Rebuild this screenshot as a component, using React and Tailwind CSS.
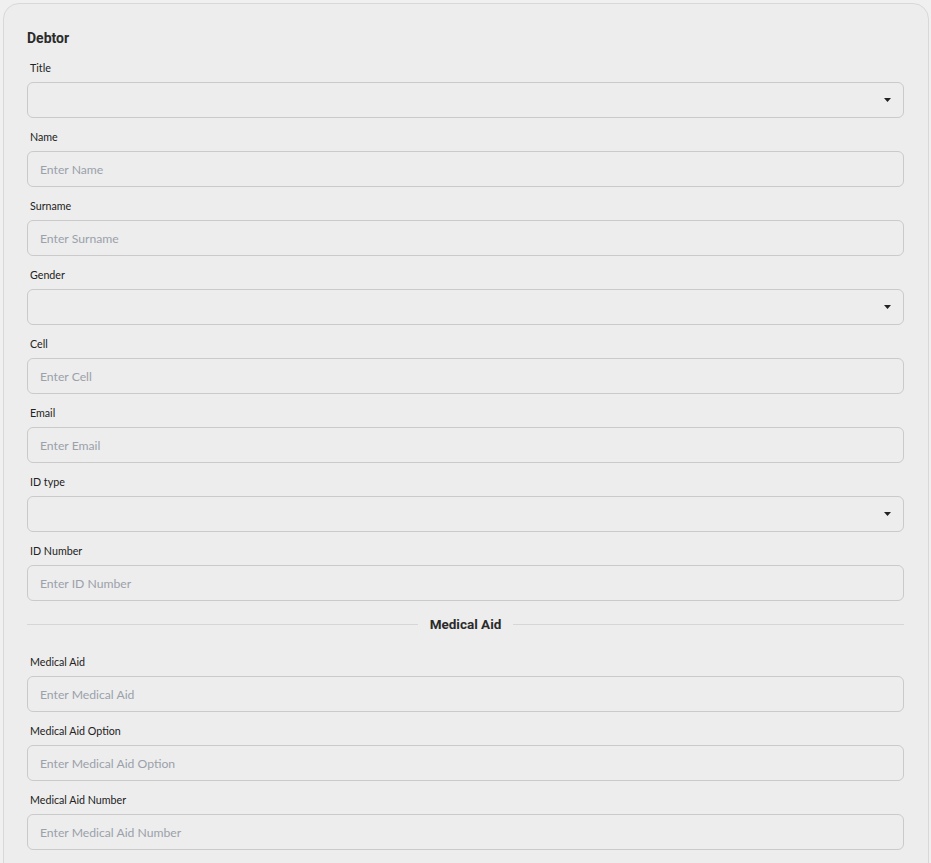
const debtorFields = [
  { label: "Title", select: true },
  { label: "Name", placeholder: "Enter Name" },
  { label: "Surname", placeholder: "Enter Surname" },
  { label: "Gender", select: true },
  { label: "Cell", placeholder: "Enter Cell" },
  { label: "Email", placeholder: "Enter Email" },
  { label: "ID type", select: true },
  { label: "ID Number", placeholder: "Enter ID Number" },
];

const medicalFields = [
  { label: "Medical Aid", placeholder: "Enter Medical Aid" },
  { label: "Medical Aid Option", placeholder: "Enter Medical Aid Option" },
  { label: "Medical Aid Number", placeholder: "Enter Medical Aid Number" },
];

export default function App() {
  return (
    <div className="min-h-screen bg-[#f0f0f0] pt-[3px] pl-[3px] pr-[2px]">
      <div className="flex flex-col rounded-t-[16px] border border-[#d8d8d8] bg-[#ededed] pt-[24px] pl-[23px] pr-[24px] pb-[40px]">
        {/* Debtor */}
        <h2 className="mb-[1px] text-[14px] font-bold leading-[20px] text-[#2b2b2b] font-['Roboto',sans-serif]">
          Debtor
        </h2>
        {debtorFields.map((f) => (
          <Field key={f.label} {...f} />
        ))}

        {/* Medical Aid */}
        <div className="mt-[13px] mb-[9px] flex h-[20px] items-center gap-[12px]">
          <div className="h-px flex-1 bg-[#d6d6d6]" />
          <span className="text-[13.5px] font-bold text-[#2b2b2b] font-['Roboto',sans-serif]">
            Medical Aid
          </span>
          <div className="h-px flex-1 bg-[#d6d6d6]" />
        </div>
        {medicalFields.map((f) => (
          <Field key={f.label} {...f} />
        ))}
      </div>
    </div>
  );
}

function Field({ label, placeholder, select }) {
  return (
    <div className="mt-[12px]">
      <label className="block pl-[3px] mb-[7px] text-[10.7px] leading-[14px] text-[#222] font-['Lato',sans-serif]">
        {label}
      </label>
      {select ? (
        <div className="flex h-[36px] items-center justify-end rounded-[6px] border border-[#cacaca] bg-[#ededed] pr-[12px]">
          <svg width="7" height="4" viewBox="0 0 7 4">
            <path d="M0 0h7L3.5 4z" fill="#222" />
          </svg>
        </div>
      ) : (
        <input
          placeholder={placeholder}
          className="block h-[36px] w-full rounded-[6px] border border-[#cacaca] bg-[#ededed] px-[12px] text-[12.2px] text-[#333] placeholder:text-[#9aa1ab] outline-none font-['Lato',sans-serif]"
        />
      )}
    </div>
  );
}
